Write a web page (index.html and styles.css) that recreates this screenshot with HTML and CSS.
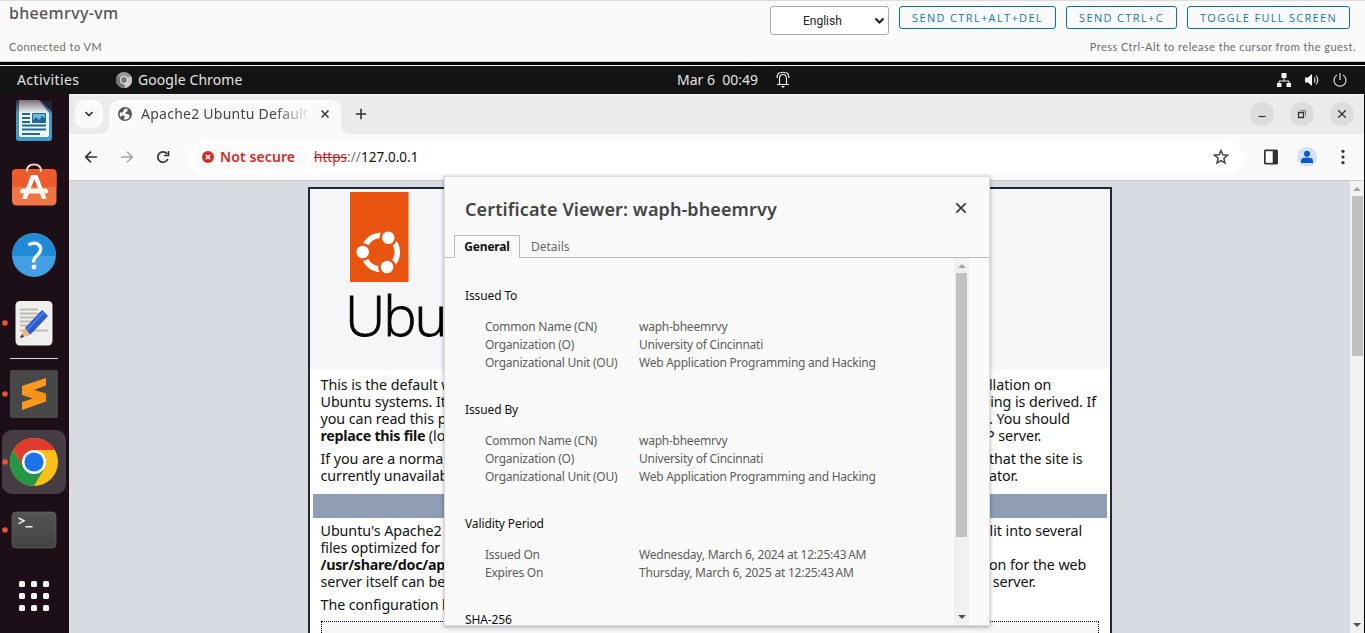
FILE: index.html
```html
<!DOCTYPE html>
<html lang="en">
<head>
<meta charset="utf-8">
<title>bheemrvy-vm</title>
<link rel="stylesheet" href="styles.css">
</head>
<body>
<header class="console">
  <div class="console-left">
    <h1 class="vm-name">bheemrvy-vm</h1>
    <div class="vm-status">Connected to VM</div>
  </div>
  <div class="console-right">
    <div class="actions">
      <div class="lang"><span>English</span><svg width="11" height="8" viewBox="0 0 11 8"><path d="M1.5 1.5l4 4 4-4" fill="none" stroke="#222" stroke-width="2.2"/></svg></div>
      <button class="btn b1">SEND CTRL+ALT+DEL</button>
      <button class="btn b2">SEND CTRL+C</button>
      <button class="btn b3">TOGGLE FULL SCREEN</button>
    </div>
    <div class="hint">Press Ctrl-Alt to release the cursor from the guest.</div>
  </div>
</header>
<div class="gap"></div>
<nav class="topbar">
  <span class="activities">Activities</span>
  <svg class="app-icon" width="16" height="16" viewBox="0 0 16 16"><circle cx="8" cy="8" r="8" fill="#999"/><path d="M8 8L15 4A8 8 0 0 1 9 16z" fill="#c8c8c8"/><path d="M8 8L1 4A8 8 0 0 0 8 16z" fill="#777"/><circle cx="8" cy="8" r="4" fill="#e8e8e8"/><circle cx="8" cy="8" r="2.9" fill="#777"/></svg>
  <span class="appname">Google Chrome</span>
  <span class="clock">Mar 6&nbsp; 00:49</span>
  <svg class="bell" width="14" height="18" viewBox="0 0 14 18"><g fill="none" stroke="#eee" stroke-width="1.2"><path d="M1 13.500h12M3.500 13V8q0-4.500 3.500-4.500q3.500 0 3.500 4.500v5M1 7q0-4 3-5.500M13 7q0-4-3-5.500M4.500 2q2.500-1.500 5 0"/></g><path d="M5 15h4l-2 2z" fill="#eee"/></svg>
  <div class="tray">
    <svg width="16" height="16" viewBox="0 0 16 16" fill="#f2f2f2"><path d="M5.500 1h5v5h-5zM1 11h4.500v4H1zM10.500 11H15v4h-4.500z"/><path d="M8 6v3M3 11V9h10v2" fill="none" stroke="#f2f2f2"/></svg>
    <svg width="16" height="16" viewBox="0 0 16 16"><path d="M1 5.500h3L8 2v12l-4-3.500H1z" fill="#f2f2f2"/><g fill="none" stroke="#ddd" stroke-width="1.200"><path d="M10 5.500q2 2.500 0 5M12 3.500q3.500 4.500 0 9"/></g></svg>
    <svg width="16" height="16" viewBox="0 0 16 16" fill="none" stroke="#ddd" stroke-width="1.200"><path d="M5 3a6 6 0 1 0 6 0M8 1v7"/></svg>
  </div>
</nav>
<div class="desktop">
  <aside class="dock">
    <svg width="69" height="539" viewBox="0 94 69 539">
      <defs>
        <linearGradient id="doc" x1="0" y1="0" x2="0" y2="1"><stop offset="0" stop-color="#322f3d"/><stop offset=".35" stop-color="#4597bd"/><stop offset="1" stop-color="#3d9dc8"/></linearGradient>
        <linearGradient id="paper" x1="0" y1="0" x2="0" y2="1"><stop offset="0" stop-color="#777079"/><stop offset=".35" stop-color="#f3f3f3"/></linearGradient>
        <linearGradient id="term" x1="0" y1="0" x2="0" y2="1"><stop offset="0" stop-color="#555"/><stop offset="1" stop-color="#434343"/></linearGradient>
      </defs>
      <path d="M16 100h25l11 12v26q0 3-3 3H19q-3 0-3-3z" fill="url(#doc)"/>
      <path d="M19 100h20l10 13v22q0 2-2 2H21q-2 0-2-2z" fill="url(#paper)"/>
      <path d="M42 101h10v10z" fill="#24233b"/>
      <path d="M22 114h8M22 118h8M22 122h8M22 125.500h24M22 129.500h24M22 134h18" stroke="#176b98" stroke-width="1.800"/>
      <rect x="32" y="113" width="14" height="10" rx="1" fill="#176b98"/><path d="M33 114h12v4l-3-2-3 4-3-3-3 3z" fill="#75bade"/>
      <rect x="12" y="169" width="44.500" height="36.500" rx="4.500" fill="#ef7446"/><path d="M12 187v-13.500q0-4.500 4.500-4.500H52q4.500 0 4.500 4.500V187z" fill="#ed5a2c"/>
      <path d="M27 172v-1q0-6.500 7-6.500t7 6.500v1" fill="none" stroke="#f2d6b2" stroke-width="2"/>
      <path d="M31 175h6.500l9 24H42l-7.700-20-7.500 20H22z" fill="#fff"/><rect x="20" y="188.500" width="28" height="5" rx="2.500" fill="#fff5ee"/>
      <circle cx="34" cy="255" r="22" fill="#42a0e2"/><path d="M12 256a22 22 0 0 1 44 0z" fill="#218ad7"/>
      <path d="M28.500 245q5-3 9-1t3 6.500q-1 3-4 5.500t-3 6.500" fill="none" stroke="#fff" stroke-width="3.200"/><circle cx="34" cy="267" r="2.400" fill="#fff"/>
      <rect x="15.500" y="301" width="37" height="44.500" rx="4.500" fill="#efefed"/>
      <path d="M20 309.500h18M20 313.500h23M20 317.500h18M20 321.500h14M20 325.500h12M20 330.500h28" stroke="#bdbbb1" stroke-width="1.800"/>
      <path d="M25 328L42 310l6 6-18 19z" fill="#2c5bd2"/><path d="M27 330l17-18" stroke="#4d7be6" stroke-width="2"/><path d="M25 328l5 7-10 3z" fill="#f0b578"/><path d="M22 334l2 3-4 1z" fill="#333"/>
      <path d="M10 358.500h48" stroke="#d9d4d8"/>
      <rect x="10" y="370" width="48" height="48" rx="2" fill="#484848"/>
      <path d="M22 386l24-8v7.500l-12 4.500 12 3.500v8L22 410v-8l11-3.500-11-3.500z" fill="#ff9a1f"/><path d="M22 394.500l11 4 13 3v-8l-12-3.500z" fill="#f08a12" opacity=".5"/>
      <rect x="2" y="430" width="64" height="64" rx="10" fill="#463c44"/>
      <circle cx="34" cy="462" r="24" fill="#fbc116"/>
      <path d="M34 450H54.800A24 24 0 0 0 13.200 450L23.600 468z" fill="#e23a2e"/>
      <path d="M13.200 450A24 24 0 0 0 34 486L44.400 468 23.600 468z" fill="#259645"/>
      <circle cx="34" cy="462" r="12" fill="#fff"/><circle cx="34" cy="462" r="9.600" fill="#1a73e8"/>
      <rect x="12" y="512" width="44" height="36" rx="4" fill="url(#term)" stroke="#626262" stroke-width=".7"/>
      <path d="M18.500 518l5.500 2.800-5.500 2.800M25.500 526.800H32.500" fill="none" stroke="#eee" stroke-width="1.500"/>
      <g fill="#e9542a"><circle cx="5" cy="323" r="2.800"/><circle cx="5" cy="394" r="2.800"/><circle cx="5" cy="462" r="2.800"/><circle cx="5" cy="530" r="2.800"/></g>
      <g fill="#f5f2f4"><rect x="19" y="581" width="6" height="6" rx="1.500"/><rect x="31" y="581" width="6" height="6" rx="1.500"/><rect x="43" y="581" width="6" height="6" rx="1.500"/><rect x="19" y="593" width="6" height="6" rx="1.500"/><rect x="31" y="593" width="6" height="6" rx="1.500"/><rect x="43" y="593" width="6" height="6" rx="1.500"/><rect x="19" y="605" width="6" height="6" rx="1.500"/><rect x="31" y="605" width="6" height="6" rx="1.500"/><rect x="43" y="605" width="6" height="6" rx="1.500"/></g>
    </svg>
  </aside>
  <main class="browser">
    <div class="tabstrip">
      <div class="tabsearch"><svg width="10" height="8" viewBox="0 0 10 8"><path d="M1.500 2L5 5.500 8.500 2" fill="none" stroke="#333" stroke-width="1.700"/></svg></div>
      <div class="tab">
        <svg width="14" height="14" viewBox="0 0 14 14"><circle cx="7" cy="7" r="7" fill="#55585c"/><path d="M7.500 1.500q-2 1-2 2.500l-1 1.500H2q-1 2.500.5 4.500L4 8.500h2.500V11l-1 1.500q5 .5 6.500-3.500l-2-2H7.500V5.500L9.500 4V2z" fill="#fafafa"/></svg>
        <span class="tabtitle">Apache2 Ubuntu Default</span>
        <svg width="10" height="10" viewBox="0 0 10 10"><path d="M1.500 1.500l7 7M8.500 1.500l-7 7" stroke="#333" stroke-width="1.500"/></svg>
      </div>
      <svg class="plus" width="12" height="12" viewBox="0 0 12 12"><path d="M6 .8v10.400M.8 6h10.400" stroke="#333" stroke-width="1.600"/></svg>
      <div class="winbtns">
        <span class="win"><svg width="10" height="10" viewBox="0 0 10 10"><path d="M1.500 7.500h7" stroke="#333" stroke-width="1.200"/></svg></span>
        <span class="win"><svg width="10" height="10" viewBox="0 0 10 10" fill="none" stroke="#333"><path d="M1.500 3.500h5v5h-5z" stroke-width="1.300"/><path d="M3.500 1.500h5v5" stroke="#777"/></svg></span>
        <span class="win"><svg width="10" height="10" viewBox="0 0 10 10"><path d="M1.200 1.200l7.600 7.600M8.800 1.200L1.200 8.800" stroke="#333" stroke-width="1.300"/></svg></span>
      </div>
    </div>
    <div class="toolbar">
      <svg width="14" height="14" viewBox="0 0 14 14"><path d="M13 7H2M7 1.700L1.700 7 7 12.300" fill="none" stroke="#333" stroke-width="1.700"/></svg>
      <svg width="14" height="14" viewBox="0 0 14 14"><path d="M1 7h11M7 1.700L12.300 7 7 12.300" fill="none" stroke="#a5a5a5" stroke-width="1.500"/></svg>
      <svg width="14" height="14" viewBox="0 0 14 14"><path d="M11.800 9A5.200 5.200 0 1 1 11 3.700M12.500 1v4.500H8" fill="none" stroke="#333" stroke-width="1.700"/></svg>
      <div class="omnibox">
        <div class="chip"><svg width="12" height="12" viewBox="0 0 12 12"><circle cx="6" cy="6" r="6" fill="#ca3029"/><path d="M3.800 3.800l4.400 4.400M8.200 3.800L3.800 8.200" stroke="#fff" stroke-width="1.400"/></svg><span>Not secure</span></div>
        <div class="url"><s>https</s><i>://</i>127.0.0.1</div>
        <svg class="star" width="16" height="16" viewBox="0 0 16 16"><path d="M8 1.500l1.800 4.300 4.700.4-3.600 3.100 1.100 4.600L8 11.500l-4 2.400 1.100-4.600-3.600-3.100 4.700-.4z" fill="none" stroke="#444" stroke-width="1.500"/></svg>
      </div>
      <svg class="side" width="14" height="16" viewBox="0 0 14 16"><rect x="0" y=".5" width="14" height="15" rx="1.500" fill="#333"/><rect x="1.700" y="2.200" width="7" height="11.600" fill="#fff"/></svg>
      <svg class="profile" width="20" height="20" viewBox="0 0 20 20"><circle cx="10" cy="10" r="10" fill="#d2e2fb"/><circle cx="10" cy="6.800" r="3" fill="#0b57d0"/><path d="M4 16v-2.200q0-3.300 6-3.300t6 3.300V16z" fill="#0b57d0"/></svg>
      <svg class="menu" width="4" height="16" viewBox="0 0 4 16" fill="#333"><circle cx="2" cy="2.300" r="1.600"/><circle cx="2" cy="8" r="1.600"/><circle cx="2" cy="13.700" r="1.600"/></svg>
    </div>
    <div class="viewport">
      <section class="page">
        <div class="pagehead">
          <svg width="59" height="90" viewBox="0 0 59 90"><path d="M0 0h58.500v90H0z" fill="#e95410"/><g fill="none" stroke="#fff" stroke-width="5.600"><circle cx="30.500" cy="60.300" r="16.800"/></g><g fill="#fff" stroke="#e95410" stroke-width="2.600"><circle cx="12.700" cy="60" r="7.600"/><circle cx="38.300" cy="45.800" r="7.600"/><circle cx="37" cy="75" r="7.600"/></g></svg>
          <div class="wordmark">Ubu</div>
        </div>
        <div class="copy">
          <div class="ln"><span>This is the default w</span><span class="r">llation on</span></div>
          <div class="ln"><span>Ubuntu systems. It</span><span class="r wide">ging is derived. If</span></div>
          <div class="ln"><span>you can read this p</span><span class="r">. You should</span></div>
          <div class="ln"><span><b>replace this file</b> (lo</span><span class="r near">P server.</span></div>
          <div class="ln para"><span>If you are a normal</span><span class="r">that the site is</span></div>
          <div class="ln"><span>currently unavailab</span><span class="r">ator.</span></div>
        </div>
        <div class="band"></div>
        <div class="copy second">
          <div class="ln"><span>Ubuntu's Apache2</span><span class="r far">lit into several</span></div>
          <div class="ln"><span>files optimized for</span></div>
          <div class="ln"><span><b>/usr/share/doc/ap</b></span><span class="r">on for the web</span></div>
          <div class="ln"><span>server itself can be</span><span class="r">&nbsp;server.</span></div>
          <div class="ln para"><span>The configuration l</span></div>
        </div>
        <div class="tree"></div>
      </section>
      <div class="pagebar"><svg width="8" height="5" viewBox="0 0 8 5"><path d="M0 5l4-4 4 4z" fill="#a3a3a3"/></svg><div class="pagethumb"></div><svg class="end" width="8" height="5" viewBox="0 0 8 5"><path d="M0 0l4 4 4-4z" fill="#505050"/></svg></div>
    </div>
  </main>
</div>
<div class="dialog">
  <div class="dlg-head"><h2>Certificate Viewer: waph-bheemrvy</h2><svg width="12" height="12" viewBox="0 0 12 12"><path d="M1.300 1.300l9.400 9.400M10.700 1.300l-9.400 9.400" stroke="#3c3c3c" stroke-width="1.800"/></svg></div>
  <div class="tabs"><div class="t-on">General</div><div class="t-off">Details</div></div>
  <div class="dlg-body">
    <div class="fields">
      <h3>Issued To</h3>
      <dl><dt>Common Name (CN)</dt><dd>waph-bheemrvy</dd><dt>Organization (O)</dt><dd>University of Cincinnati</dd><dt>Organizational Unit (OU)</dt><dd>Web Application Programming and Hacking</dd></dl>
      <h3>Issued By</h3>
      <dl><dt>Common Name (CN)</dt><dd>waph-bheemrvy</dd><dt>Organization (O)</dt><dd>University of Cincinnati</dd><dt>Organizational Unit (OU)</dt><dd>Web Application Programming and Hacking</dd></dl>
      <h3>Validity Period</h3>
      <dl><dt>Issued On</dt><dd class="date">Wednesday, March 6, 2024 at 12:25:43&#8239;AM</dd><dt>Expires On</dt><dd class="date">Thursday, March 6, 2025 at 12:25:43&#8239;AM</dd></dl>
      <h3 class="last">SHA-256</h3>
    </div>
    <div class="dlg-bar"><svg width="8" height="5" viewBox="0 0 8 5"><path d="M0 5l4-4 4 4z" fill="#a3a3a3"/></svg><div class="dlg-thumb"></div><svg class="end" width="8" height="5" viewBox="0 0 8 5"><path d="M0 0l4 4 4-4z" fill="#505050"/></svg></div>
  </div>
</div>
</body>
</html>
```
FILE: styles.css
```css
*{box-sizing:border-box}
body{margin:0;width:1365px;height:633px;overflow:hidden;background:#000;font-family:"Noto Sans","Open Sans",sans-serif;white-space:nowrap;color:#222}
svg{display:block;flex:none}
h1,h2,h3,dl,dd{margin:0;font-weight:400}
.console{height:62px;background:#fafafa;border-top:1px solid #ddd;border-bottom:1px solid #ccc;display:flex;justify-content:space-between;padding:0 9px}
.vm-name{font-size:16px;line-height:20px;margin-top:2px;color:#565656;font-weight:500;letter-spacing:.32px}
.vm-status{font-family:Lato,sans-serif;font-size:11px;line-height:14px;margin-top:17px;color:#6a6a6a;letter-spacing:.5px}
.console-right{display:flex;flex-direction:column;align-items:flex-end}
.actions{display:flex;align-items:flex-start;padding:5px 6px 0 0;gap:10px}
.lang{width:119px;height:29px;border:1px solid #aaa;border-radius:3px;background:#fff;display:flex;align-items:center;justify-content:space-between;padding:0 3px 0 32px;font:12px Roboto,sans-serif;color:#222}
.btn{height:23px;border:1px solid #0072a3;border-radius:3px;background:#fafafa;color:#1976ad;font:11px/21px "Open Sans",sans-serif;letter-spacing:1.35px;padding:0;text-align:center}
.b1{width:157px}.b2{width:111px}.b3{width:163px;letter-spacing:1.3px}
.hint{font-family:Lato,sans-serif;font-size:11px;line-height:14px;margin-top:5px;color:#6a6a6a;letter-spacing:.47px}
.gap{height:4px;border-bottom:1px solid #eee}
.topbar{height:28px;background:#131313;color:#e4e4e4;font-size:14px;display:flex;align-items:center;padding:0 17px}
.topbar span{padding-bottom:1px}
.activities{width:99px;letter-spacing:.4px}
.appname{margin-left:6px;width:539px;letter-spacing:.08px}
.clock{width:99px}
.tray{display:flex;gap:12px;margin-left:auto}
.desktop{height:539px;display:flex}
.dock{width:69px;background:#1d0f17}
.browser{width:1295px;background:#fafafa}
.tabstrip{height:40px;background:#ebebeb;display:flex;padding-left:6px;border-top:1px solid #f8f8f8}
.tabsearch{width:28px;height:28px;border-radius:9px;background:#fafafa;margin:5px 6px 0 0;display:flex;align-items:center;justify-content:center}
.tab{position:relative;margin-top:5px;width:232px;height:34px;border-radius:10px 10px 0 0;background:#fafafa;display:flex;align-items:center;padding:0 11px 6px 9px}
.tab::before,.tab::after{content:"";position:absolute;bottom:0;width:9px;height:9px}
.tab::before{left:-9px;background:radial-gradient(circle at 0 0,transparent 8.500px,#fafafa 9px)}
.tab::after{right:-9px;background:radial-gradient(circle at 100% 0,transparent 8.500px,#fafafa 9px)}
.tabtitle{font-size:14px;line-height:22px;color:#444;margin:0 9px;width:170px;letter-spacing:.25px;-webkit-mask-image:linear-gradient(90deg,#000 78%,transparent 100%)}
.plus{margin:13px 0 0 14px}
.winbtns{margin:7px 10px 0 auto;display:flex;gap:16px}
.win{width:24px;height:24px;border-radius:50%;background:#dcdcdc;display:flex;align-items:center;justify-content:center}
.toolbar{height:47px;display:flex;align-items:center;padding-left:15px;gap:22px;border-bottom:1px solid #c8c8c8}
.omnibox{width:1055px;height:34px;border-radius:17px;background:#fff;margin-left:-3px;display:flex;align-items:center}
.chip{height:26px;border-radius:13px;background:#fcfafa;padding:0 8px 0 7px;margin-left:6px;width:113px;display:flex;align-items:center;gap:6px;color:#ca3029;font-size:14px;font-weight:600;letter-spacing:.1px}
.chip span{padding-bottom:2px}
.url{font-size:13.500px;color:#111;margin-left:6px;letter-spacing:.05px}
.url s{color:#c5221f}.url i{color:#777;font-style:normal}
.star{margin:0 15px 0 auto}
.side{margin-left:-2px}.profile{margin-left:-3px}.menu{margin-left:2px}
.viewport{height:452px;background:#d8dbe2;display:flex;justify-content:space-between;overflow:hidden}
.page{width:804px;height:500px;margin:6px 0 0 239px;border:2px solid #212738;background:#fff;color:#111}
.pagehead{height:180px;background:#f5f6f7;padding:3px 0 0 40px}
.wordmark{font:300 56px/64px "Open Sans",sans-serif;color:#000;margin:0 0 0 -5px;letter-spacing:-2px;-webkit-text-stroke:.8px #000}
.copy{padding:7px 10px 0 10.500px;font-size:14.300px;line-height:17px;letter-spacing:-.07px}
.ln{display:flex;height:17px}
.ln span{width:124px;white-space:pre}
.ln .r{width:120px;margin-left:544.500px}
.ln .wide{margin-left:537px}
.ln .near{margin-left:541.500px}
.ln .far{margin-left:548px}
.ln b{letter-spacing:-.28px}
.ln.para{margin-top:6px}
.band{height:24px;background:#8f9db5;margin:10px 3px 0}
.second{padding-top:4px}
.tree{height:30px;margin:8px 11px 0;border:1px dotted #000;background:#f5f6f7}
.pagebar{width:14px;background:#f1f1f1;padding:5px 1px;display:flex;flex-direction:column;align-items:center}
.pagethumb{width:11px;height:160px;background:#c1c1c1;margin-top:5px}
.end{margin-top:auto}
.dialog{position:absolute;left:444px;top:176px;width:546px;height:450px;background:#fafafa;border:1px solid #ddd;box-shadow:0 1px 4px rgba(0,0,0,.35);overflow:hidden}
.dlg-head{height:49px;margin-bottom:9px;padding:12px 22px 0 20px;display:flex;justify-content:space-between;align-items:center}
.dlg-head h2{font-size:18px;line-height:24px;padding-top:3px;font-weight:600;color:#444;letter-spacing:.11px}
.tabs{height:23px;border-bottom:1px solid #bbb;padding-left:9px;display:flex;font-size:12px;line-height:22px}
.t-on{width:66px;height:23px;border:1px solid #bbb;border-bottom:0;background:#fafafa;text-align:center;font-weight:700;letter-spacing:-.2px;color:#111}
.t-off{padding:1px 0 0 11px;color:#666}
.dlg-body{height:367px;display:flex;justify-content:space-between;overflow:hidden}
.fields{padding:30px 0 0 20px;font-size:12px;line-height:18px;color:#5d5d5d;letter-spacing:-.25px}
.fields h3{font-size:12px;line-height:16px;color:#111;letter-spacing:-.12px}
.fields .last{line-height:12px;margin-top:2px}
dl{display:grid;grid-template-columns:154px auto;padding:14px 0 30px 20px}
.date{letter-spacing:-.22px}
.dlg-bar{width:15px;background:#f1f1f1;margin-right:20px;padding:5px 1px 5px;display:flex;flex-direction:column;align-items:center}
.dlg-thumb{width:11px;height:264px;background:#c1c1c1;margin-top:5px}
```
